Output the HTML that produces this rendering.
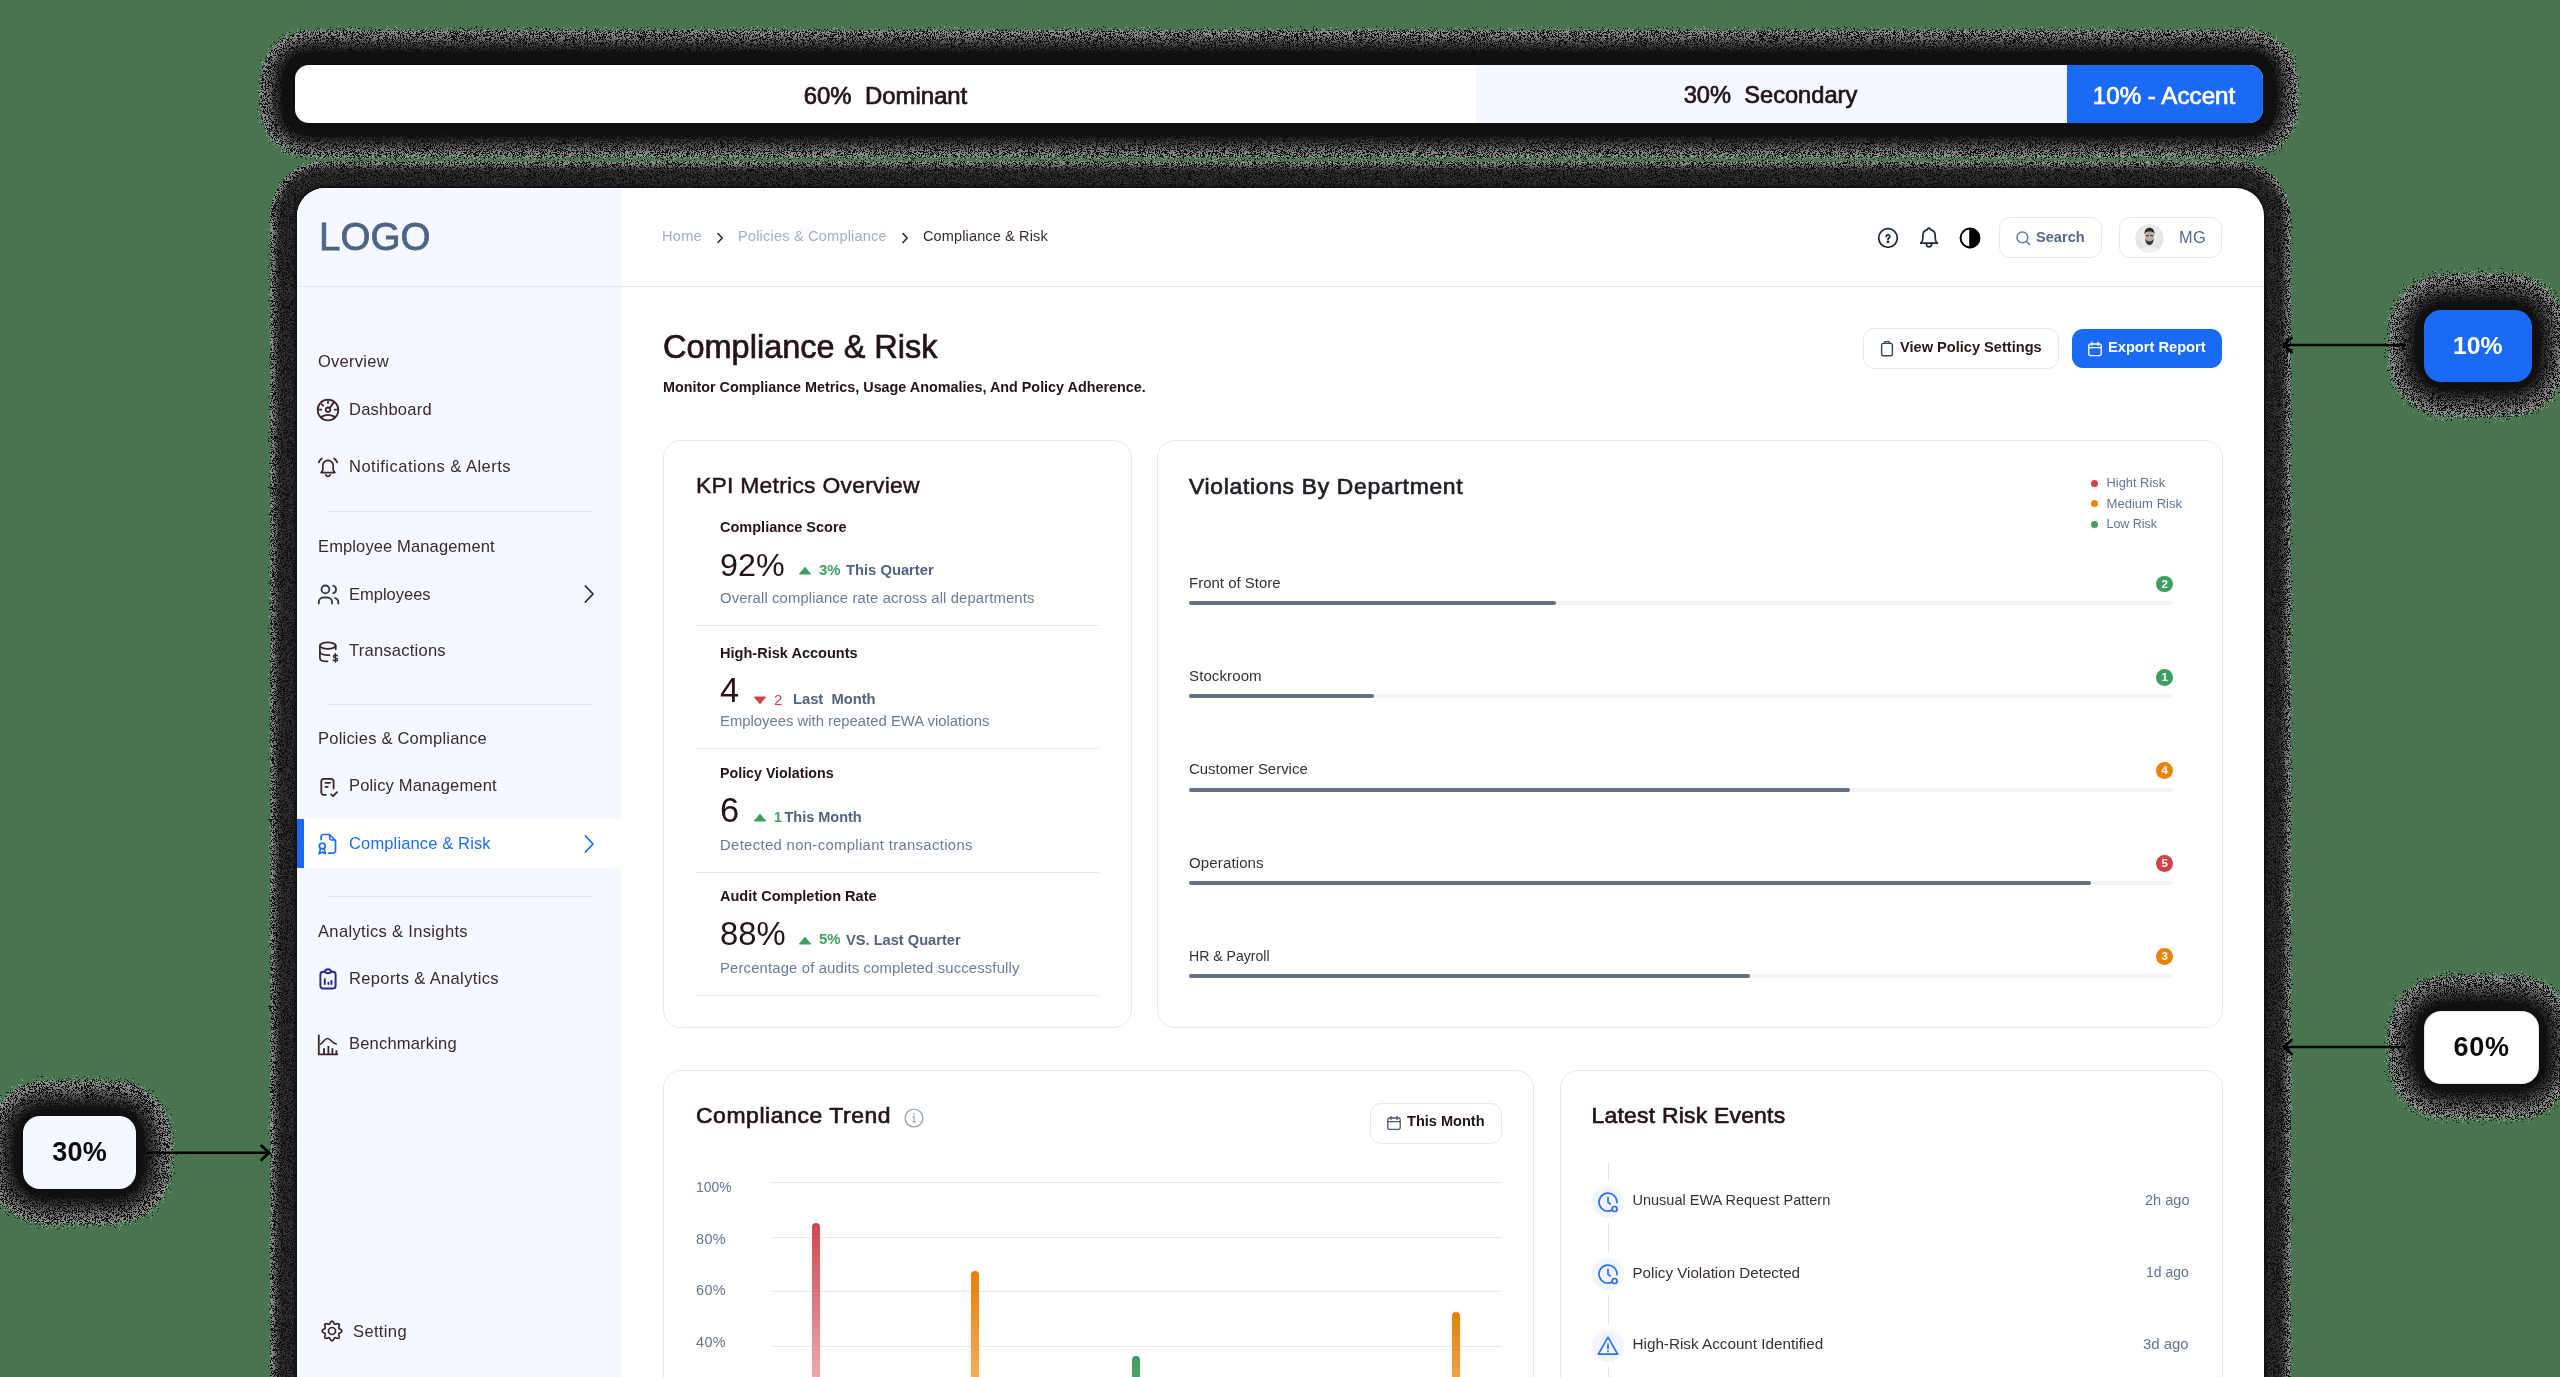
<!DOCTYPE html>
<html><head><meta charset="utf-8"><title>Compliance &amp; Risk</title>
<style>
html,body{margin:0;padding:0;}
body{width:2560px;height:1377px;overflow:hidden;position:relative;background:#4a734f;font-family:"Liberation Sans",sans-serif;}
.b{position:absolute;box-sizing:border-box;}
.t{position:absolute;white-space:nowrap;}
#root{position:absolute;left:0;top:0;width:2560px;height:1377px;overflow:hidden;transform:translateZ(0);will-change:transform;}
</style></head><body><div id="root">
<svg class="b" style="left:0;top:0;" width="2560" height="1377" viewBox="0 0 2560 1377"><defs><filter id="nz" filterUnits="userSpaceOnUse" x="220" y="0" width="2120" height="210" color-interpolation-filters="sRGB"><feGaussianBlur in="SourceAlpha" stdDeviation="8" result="a"/><feTurbulence type="fractalNoise" baseFrequency="1.37" numOctaves="1" seed="7" result="n"/><feColorMatrix in="n" type="matrix" values="0 0 0 0 0  0 0 0 0 0  0 0 0 0 0  1 0 0 0 0" result="nr"/><feComposite in="a" in2="nr" operator="arithmetic" k1="0" k2="1" k3="0.35" k4="0.235" result="m"/><feComponentTransfer in="m" result="mask0"><feFuncA type="discrete" tableValues="0 1"/></feComponentTransfer><feComponentTransfer in="a" result="sup"><feFuncA type="discrete" tableValues="0 1 1 1 1 1 1 1 1 1 1 1 1 1 1 1 1 1 1 1 1 1 1 1 1 1 1 1 1 1 1 1 1 1 1 1 1 1 1 1 1 1 1 1 1 1 1 1 1 1 1 1 1 1 1 1 1 1 1 1"/></feComponentTransfer><feComposite in="mask0" in2="sup" operator="in" result="mask"/><feColorMatrix in="n" type="matrix" values="0 0 0 0 0  0 0 0 0 0  0 0 0 0 0  0 1 0 0 0" result="ng"/><feComposite in="a" in2="ng" operator="arithmetic" k1="0" k2="0" k3="-1" k4="0.985" result="bm1"/><feColorMatrix in="n" type="matrix" values="0 0 0 0 0  0 0 0 0 0  0 0 0 0 0  0 0 1 0 0" result="nb"/><feComposite in="a" in2="nb" operator="arithmetic" k1="0" k2="1" k3="0.22" k4="-0.51" result="bm2"/><feComponentTransfer in="bm1" result="bmk1"><feFuncA type="discrete" tableValues="0 1"/></feComponentTransfer><feComponentTransfer in="bm2" result="bmk2"><feFuncA type="discrete" tableValues="0 1"/></feComponentTransfer><feComposite in="bmk1" in2="bmk2" operator="over" result="bmask"/><feFlood flood-color="#101010" result="blk"/><feComposite in="blk" in2="bmask" operator="in" result="blackpx"/><feColorMatrix in="a" type="matrix" values="0 0 0 -0.56 0.64  0 0 0 -0.56 0.64  0 0 0 -0.56 0.64  0 0 0 0 1" result="greypx"/><feMerge result="mix"><feMergeNode in="greypx"/><feMergeNode in="blackpx"/></feMerge><feComposite in="mix" in2="mask" operator="in"/></filter><filter id="nzp" filterUnits="userSpaceOnUse" x="240" y="130" width="2080" height="1247" color-interpolation-filters="sRGB"><feGaussianBlur in="SourceAlpha" stdDeviation="3.6" result="a"/><feTurbulence type="fractalNoise" baseFrequency="1.37" numOctaves="1" seed="7" result="n"/><feColorMatrix in="n" type="matrix" values="0 0 0 0 0  0 0 0 0 0  0 0 0 0 0  1 0 0 0 0" result="nr"/><feComposite in="a" in2="nr" operator="arithmetic" k1="0" k2="1" k3="0.35" k4="0.235" result="m"/><feComponentTransfer in="m" result="mask0"><feFuncA type="discrete" tableValues="0 1"/></feComponentTransfer><feComponentTransfer in="a" result="sup"><feFuncA type="discrete" tableValues="0 1 1 1 1 1 1 1 1 1 1 1 1 1 1 1 1 1 1 1 1 1 1 1 1 1 1 1 1 1 1 1 1 1 1 1 1 1 1 1 1 1 1 1 1 1 1 1 1 1 1 1 1 1 1 1 1 1 1 1"/></feComponentTransfer><feComposite in="mask0" in2="sup" operator="in" result="mask"/><feColorMatrix in="n" type="matrix" values="0 0 0 0 0  0 0 0 0 0  0 0 0 0 0  0 1 0 0 0" result="ng"/><feComposite in="a" in2="ng" operator="arithmetic" k1="0" k2="0" k3="-1" k4="0.985" result="bm1"/><feColorMatrix in="n" type="matrix" values="0 0 0 0 0  0 0 0 0 0  0 0 0 0 0  0 0 1 0 0" result="nb"/><feComposite in="a" in2="nb" operator="arithmetic" k1="0" k2="1" k3="0.22" k4="-0.51" result="bm2"/><feComponentTransfer in="bm1" result="bmk1"><feFuncA type="discrete" tableValues="0 1"/></feComponentTransfer><feComponentTransfer in="bm2" result="bmk2"><feFuncA type="discrete" tableValues="0 1"/></feComponentTransfer><feComposite in="bmk1" in2="bmk2" operator="over" result="bmask"/><feFlood flood-color="#101010" result="blk"/><feComposite in="blk" in2="bmask" operator="in" result="blackpx"/><feColorMatrix in="a" type="matrix" values="0 0 0 -0.56 0.64  0 0 0 -0.56 0.64  0 0 0 -0.56 0.64  0 0 0 0 1" result="greypx"/><feMerge result="mix"><feMergeNode in="greypx"/><feMergeNode in="blackpx"/></feMerge><feComposite in="mix" in2="mask" operator="in"/></filter><filter id="nzb" x="-35%" y="-45%" width="170%" height="190%" color-interpolation-filters="sRGB"><feGaussianBlur in="SourceAlpha" stdDeviation="10" result="a"/><feTurbulence type="fractalNoise" baseFrequency="1.37" numOctaves="1" seed="7" result="n"/><feColorMatrix in="n" type="matrix" values="0 0 0 0 0  0 0 0 0 0  0 0 0 0 0  1 0 0 0 0" result="nr"/><feComposite in="a" in2="nr" operator="arithmetic" k1="0" k2="1" k3="0.35" k4="0.235" result="m"/><feComponentTransfer in="m" result="mask0"><feFuncA type="discrete" tableValues="0 1"/></feComponentTransfer><feComponentTransfer in="a" result="sup"><feFuncA type="discrete" tableValues="0 1 1 1 1 1 1 1 1 1 1 1 1 1 1 1 1 1 1 1 1 1 1 1 1 1 1 1 1 1 1 1 1 1 1 1 1 1 1 1 1 1 1 1 1 1 1 1 1 1 1 1 1 1 1 1 1 1 1 1"/></feComponentTransfer><feComposite in="mask0" in2="sup" operator="in" result="mask"/><feColorMatrix in="n" type="matrix" values="0 0 0 0 0  0 0 0 0 0  0 0 0 0 0  0 1 0 0 0" result="ng"/><feComposite in="a" in2="ng" operator="arithmetic" k1="0" k2="0" k3="-1" k4="0.985" result="bm1"/><feColorMatrix in="n" type="matrix" values="0 0 0 0 0  0 0 0 0 0  0 0 0 0 0  0 0 1 0 0" result="nb"/><feComposite in="a" in2="nb" operator="arithmetic" k1="0" k2="1" k3="0.22" k4="-0.51" result="bm2"/><feComponentTransfer in="bm1" result="bmk1"><feFuncA type="discrete" tableValues="0 1"/></feComponentTransfer><feComponentTransfer in="bm2" result="bmk2"><feFuncA type="discrete" tableValues="0 1"/></feComponentTransfer><feComposite in="bmk1" in2="bmk2" operator="over" result="bmask"/><feFlood flood-color="#101010" result="blk"/><feComposite in="blk" in2="bmask" operator="in" result="blackpx"/><feColorMatrix in="a" type="matrix" values="0 0 0 -0.56 0.64  0 0 0 -0.56 0.64  0 0 0 -0.56 0.64  0 0 0 0 1" result="greypx"/><feMerge result="mix"><feMergeNode in="greypx"/><feMergeNode in="blackpx"/></feMerge><feComposite in="mix" in2="mask" operator="in"/></filter></defs><g fill="#000"><rect x="271" y="41" width="2016" height="106" rx="38" ry="38" filter="url(#nz)"/><rect x="275" y="166" width="2011" height="1304" rx="50" ry="50" filter="url(#nzp)" fill-opacity="0.82"/><rect x="1" y="1094" width="157" height="117" rx="43" ry="43" filter="url(#nzb)"/><rect x="2402" y="287.5" width="151.5" height="116" rx="43" ry="43" filter="url(#nzb)"/><rect x="2402" y="989" width="158.5" height="116.5" rx="43" ry="43" filter="url(#nzb)"/></g></svg>
<div class="b" style="left:295px;top:65px;width:1968px;height:58px;border-radius:14px;box-shadow:0 0 2px 1px #101010;background:#fff;overflow:hidden;"><div class="b" style="left:1181px;top:0;width:591px;height:58px;background:#f5f8ff;"></div><div class="b" style="left:1772px;top:0;width:196px;height:58px;background:#1b6af5;"></div></div>
<div class="t" style="left:885.5px;top:83.74px;font-size:23.93px;line-height:23.93px;color:#24141a;font-weight:400;-webkit-text-stroke:0.72px #24141a;transform:translateX(-50%);margin-left:0.00px;">60%&nbsp; Dominant</div>
<div class="t" style="left:1770.5px;top:83.97px;font-size:23.66px;line-height:23.66px;color:#24141a;font-weight:400;-webkit-text-stroke:0.71px #24141a;transform:translateX(-50%);margin-left:0.00px;">30%&nbsp; Secondary</div>
<div class="t" style="left:2164px;top:83.51px;font-size:24.2px;line-height:24.2px;color:#fff;font-weight:400;-webkit-text-stroke:0.73px #fff;transform:translateX(-50%);margin-left:0.00px;">10% - Accent</div>
<div class="b" style="left:297px;top:188px;width:1967px;height:1260px;border-radius:28px;box-shadow:0 0 3px 2px #101010;background:#fff;overflow:hidden;"><div class="b" style="left:0;top:0;width:325px;height:1260px;background:#f5f8ff;"></div><div class="b" style="left:0;top:98px;width:1967px;height:1px;background:#e4e7ef;"></div><div class="b" style="left:0;top:631px;width:325px;height:49px;background:#fff;"></div><div class="b" style="left:0;top:631px;width:7px;height:49px;background:#1b6af5;"></div></div>
<div class="t" style="left:319px;top:218.06px;font-size:38.62px;line-height:38.62px;color:#4f6484;font-weight:400;-webkit-text-stroke:0.81px #4f6484;">LOGO</div>
<div class="t" style="left:318px;top:354.00px;font-size:16.54px;line-height:16.54px;color:#3a2a2e;font-weight:400;letter-spacing:0.243px;">Overview</div>
<div class="t" style="left:349px;top:401.50px;font-size:16.54px;line-height:16.54px;color:#3a2a2e;font-weight:400;letter-spacing:0.216px;">Dashboard</div>
<div class="t" style="left:349px;top:458.50px;font-size:16.54px;line-height:16.54px;color:#3a2a2e;font-weight:400;letter-spacing:0.476px;">Notifications &amp; Alerts</div>
<div class="b" style="left:327px;top:511px;width:266px;height:1px;background:#e3e6ee;"></div>
<div class="t" style="left:318px;top:538.50px;font-size:16.54px;line-height:16.54px;color:#3a2a2e;font-weight:400;letter-spacing:0.112px;">Employee Management</div>
<div class="t" style="left:349px;top:585.53px;font-size:16.5px;line-height:16.5px;color:#3a2a2e;font-weight:400;">Employees</div>
<div class="t" style="left:349px;top:643.00px;font-size:16.54px;line-height:16.54px;color:#3a2a2e;font-weight:400;letter-spacing:0.234px;">Transactions</div>
<div class="b" style="left:327px;top:704px;width:266px;height:1px;background:#e3e6ee;"></div>
<div class="t" style="left:318px;top:731.00px;font-size:16.54px;line-height:16.54px;color:#3a2a2e;font-weight:400;letter-spacing:0.208px;">Policies &amp; Compliance</div>
<div class="t" style="left:349px;top:778.00px;font-size:16.54px;line-height:16.54px;color:#3a2a2e;font-weight:400;letter-spacing:0.152px;">Policy Management</div>
<div class="t" style="left:349px;top:835.50px;font-size:16.54px;line-height:16.54px;color:#1d6cf2;font-weight:400;letter-spacing:0.123px;">Compliance &amp; Risk</div>
<div class="b" style="left:327px;top:896px;width:266px;height:1px;background:#e3e6ee;"></div>
<div class="t" style="left:318px;top:923.50px;font-size:16.54px;line-height:16.54px;color:#3a2a2e;font-weight:400;letter-spacing:0.330px;">Analytics &amp; Insights</div>
<div class="t" style="left:349px;top:970.50px;font-size:16.54px;line-height:16.54px;color:#3a2a2e;font-weight:400;letter-spacing:0.348px;">Reports &amp; Analytics</div>
<div class="t" style="left:349px;top:1036.00px;font-size:16.54px;line-height:16.54px;color:#3a2a2e;font-weight:400;letter-spacing:0.176px;">Benchmarking</div>
<div class="t" style="left:353px;top:1324.00px;font-size:16.54px;line-height:16.54px;color:#3a2a2e;font-weight:400;letter-spacing:0.354px;">Setting</div>
<div class="t" style="left:662px;top:228.96px;font-size:14.52px;line-height:14.52px;color:#a3aec2;font-weight:400;letter-spacing:0.298px;">Home</div>
<div class="t" style="left:738px;top:228.96px;font-size:14.52px;line-height:14.52px;color:#a3aec2;font-weight:400;letter-spacing:0.212px;">Policies &amp; Compliance</div>
<div class="t" style="left:923px;top:228.96px;font-size:14.52px;line-height:14.52px;color:#3a2a2e;font-weight:400;letter-spacing:0.127px;">Compliance &amp; Risk</div>
<svg class="b" style="left:715.5px;top:231px;" width="8" height="14" viewBox="0 0 8 14" fill="none"><path d="M2 2.5 L6.2 7 L2 11.5" stroke="#2b2b33" stroke-width="1.6" stroke-linecap="round" stroke-linejoin="round"/></svg>
<svg class="b" style="left:900.5px;top:231px;" width="8" height="14" viewBox="0 0 8 14" fill="none"><path d="M2 2.5 L6.2 7 L2 11.5" stroke="#2b2b33" stroke-width="1.6" stroke-linecap="round" stroke-linejoin="round"/></svg>
<div class="b" style="left:1999px;top:216.8px;width:102.5px;height:41px;border:1.2px solid #e4e8f0;border-radius:11px;background:#fff;"></div>
<div class="t" style="left:2036px;top:229.51px;font-size:14.52px;line-height:14.52px;color:#56688a;font-weight:700;letter-spacing:0.041px;">Search</div>
<div class="b" style="left:2118.5px;top:216.8px;width:103px;height:41px;border:1.2px solid #e4e8f0;border-radius:11px;background:#fff;"></div>
<div class="t" style="left:2179px;top:228.94px;font-size:16.32px;line-height:16.32px;color:#56688a;font-weight:400;letter-spacing:0.315px;">MG</div>
<div class="t" style="left:663px;top:331.23px;font-size:32.51px;line-height:32.51px;color:#24141a;font-weight:400;-webkit-text-stroke:0.68px #24141a;">Compliance &amp; Risk</div>
<div class="t" style="left:663px;top:380.34px;font-size:14.37px;line-height:14.37px;color:#24141a;font-weight:700;">Monitor Compliance Metrics, Usage Anomalies, And Policy Adherence.</div>
<div class="b" style="left:1863px;top:328px;width:195.5px;height:41px;border:1.2px solid #e4e8f0;border-radius:11px;background:#fff;"></div>
<div class="t" style="left:1900px;top:339.84px;font-size:14.6px;line-height:14.6px;color:#2b1619;font-weight:700;">View Policy Settings</div>
<div class="b" style="left:2071.5px;top:328.5px;width:150px;height:39.5px;border-radius:11px;background:#1b6af5;"></div>
<div class="t" style="left:2108px;top:339.80px;font-size:14.65px;line-height:14.65px;color:#fff;font-weight:700;">Export Report</div>
<div class="b" style="left:663px;top:440px;width:468.5px;height:588px;border:1.2px solid #e4e8f0;border-radius:18px;background:#fff;"></div>
<div class="t" style="left:696px;top:474.37px;font-size:22.9px;line-height:22.9px;color:#24141a;font-weight:400;-webkit-text-stroke:0.48px #24141a;letter-spacing:0.255px;">KPI Metrics Overview</div>
<div class="t" style="left:720px;top:519.71px;font-size:14.52px;line-height:14.52px;color:#24141a;font-weight:700;">Compliance Score</div>
<div class="t" style="left:720px;top:548.93px;font-size:32.27px;line-height:32.27px;color:#24141a;font-weight:400;">92%</div>
<svg class="b" style="left:797.5px;top:566.0px;" width="14" height="9" viewBox="0 0 14 9" fill="none"><path d="M7 1.2 L12.6 8 L1.4 8 Z" fill="#3f9f62" stroke="#3f9f62" stroke-width="1" stroke-linejoin="round"/></svg>
<div class="t" style="left:819px;top:562.84px;font-size:14.95px;line-height:14.95px;color:#3f9f62;font-weight:700;">3%</div>
<div class="t" style="left:846px;top:563.01px;font-size:14.75px;line-height:14.75px;color:#52637f;font-weight:700;">This Quarter</div>
<div class="t" style="left:720px;top:591.19px;font-size:14.84px;line-height:14.84px;color:#6b7b98;font-weight:400;letter-spacing:0.118px;">Overall compliance rate across all departments</div>
<div class="b" style="left:696px;top:624.5px;width:403px;height:1px;background:#e4e7ef;"></div>
<div class="t" style="left:720px;top:645.93px;font-size:14.55px;line-height:14.55px;color:#24141a;font-weight:700;">High-Risk Accounts</div>
<div class="t" style="left:720px;top:673.34px;font-size:34.45px;line-height:34.45px;color:#24141a;font-weight:400;">4</div>
<svg class="b" style="left:753px;top:696.0px;" width="14" height="9" viewBox="0 0 14 9" fill="none"><path d="M7 7.8 L12.6 1 L1.4 1 Z" fill="#d1434b" stroke="#d1434b" stroke-width="1" stroke-linejoin="round"/></svg>
<div class="t" style="left:774px;top:691.76px;font-size:15.05px;line-height:15.05px;color:#d1434b;font-weight:400;">2</div>
<div class="t" style="left:793px;top:692.03px;font-size:14.73px;line-height:14.73px;color:#52637f;font-weight:700;">Last&nbsp; Month</div>
<div class="t" style="left:720px;top:714.44px;font-size:14.84px;line-height:14.84px;color:#6b7b98;font-weight:400;letter-spacing:0.011px;">Employees with repeated EWA violations</div>
<div class="b" style="left:696px;top:748px;width:403px;height:1px;background:#e4e7ef;"></div>
<div class="t" style="left:720px;top:765.95px;font-size:14.24px;line-height:14.24px;color:#24141a;font-weight:700;">Policy Violations</div>
<div class="t" style="left:720px;top:793.34px;font-size:34.45px;line-height:34.45px;color:#24141a;font-weight:400;">6</div>
<svg class="b" style="left:753px;top:812.5px;" width="14" height="9" viewBox="0 0 14 9" fill="none"><path d="M7 1.2 L12.6 8 L1.4 8 Z" fill="#3f9f62" stroke="#3f9f62" stroke-width="1" stroke-linejoin="round"/></svg>
<div class="t" style="left:774px;top:809.98px;font-size:14.2px;line-height:14.2px;color:#3f9f62;font-weight:700;">1</div>
<div class="t" style="left:784.5px;top:809.75px;font-size:14.47px;line-height:14.47px;color:#52637f;font-weight:700;">This Month</div>
<div class="t" style="left:720px;top:838.44px;font-size:14.84px;line-height:14.84px;color:#6b7b98;font-weight:400;letter-spacing:0.345px;">Detected non-compliant transactions</div>
<div class="b" style="left:696px;top:872px;width:403px;height:1px;background:#e4e7ef;"></div>
<div class="t" style="left:720px;top:888.69px;font-size:14.54px;line-height:14.54px;color:#24141a;font-weight:700;">Audit Completion Rate</div>
<div class="t" style="left:720px;top:918.01px;font-size:32.77px;line-height:32.77px;color:#24141a;font-weight:400;">88%</div>
<svg class="b" style="left:797.5px;top:935.5px;" width="14" height="9" viewBox="0 0 14 9" fill="none"><path d="M7 1.2 L12.6 8 L1.4 8 Z" fill="#3f9f62" stroke="#3f9f62" stroke-width="1" stroke-linejoin="round"/></svg>
<div class="t" style="left:819px;top:932.34px;font-size:14.95px;line-height:14.95px;color:#3f9f62;font-weight:700;">5%</div>
<div class="t" style="left:846px;top:932.61px;font-size:14.64px;line-height:14.64px;color:#52637f;font-weight:700;">VS. Last Quarter</div>
<div class="t" style="left:720px;top:961.44px;font-size:14.84px;line-height:14.84px;color:#6b7b98;font-weight:400;letter-spacing:0.161px;">Percentage of audits completed successfully</div>
<div class="b" style="left:696px;top:995px;width:403px;height:1px;background:#e4e7ef;"></div>
<div class="b" style="left:1157px;top:440px;width:1065.5px;height:588px;border:1.2px solid #e4e8f0;border-radius:18px;background:#fff;"></div>
<div class="t" style="left:1189px;top:475.12px;font-size:22.9px;line-height:22.9px;color:#1f1f26;font-weight:400;-webkit-text-stroke:0.69px #1f1f26;letter-spacing:0.684px;">Violations By Department</div>
<div class="b" style="left:2090.5px;top:480px;width:7px;height:7px;border-radius:50%;background:#d1434b;"></div>
<div class="t" style="left:2106.5px;top:476.71px;font-size:12.87px;line-height:12.87px;color:#64748f;font-weight:400;">Hight Risk</div>
<div class="b" style="left:2090.5px;top:500px;width:7px;height:7px;border-radius:50%;background:#e8830c;"></div>
<div class="t" style="left:2106.5px;top:497.02px;font-size:13.09px;line-height:13.09px;color:#64748f;font-weight:400;">Medium Risk</div>
<div class="b" style="left:2090.5px;top:521px;width:7px;height:7px;border-radius:50%;background:#3f9f62;"></div>
<div class="t" style="left:2106.5px;top:518.04px;font-size:12.48px;line-height:12.48px;color:#64748f;font-weight:400;">Low Risk</div>
<div class="t" style="left:1189px;top:575.31px;font-size:14.99px;line-height:14.99px;color:#3a2f35;font-weight:400;">Front of Store</div>
<div class="b" style="left:1189px;top:601.1px;width:984px;height:4px;border-radius:2px;background:#f1f3f6;"></div>
<div class="b" style="left:1189px;top:601.1px;width:367px;height:4px;border-radius:2px;background:#667085;"></div>
<div class="b" style="left:2156.3999999999996px;top:575.9000000000001px;width:16.6px;height:16.6px;border-radius:50%;background:#3f9f62;"></div>
<div class="t" style="left:2164.7px;top:578.77px;font-size:11.5px;line-height:11.5px;color:#fff;font-weight:700;transform:translateX(-50%);margin-left:0.00px;">2</div>
<div class="t" style="left:1189px;top:668.46px;font-size:15.05px;line-height:15.05px;color:#3a2f35;font-weight:400;letter-spacing:0.090px;">Stockroom</div>
<div class="b" style="left:1189px;top:694.3000000000001px;width:984px;height:4px;border-radius:2px;background:#f1f3f6;"></div>
<div class="b" style="left:1189px;top:694.3000000000001px;width:185px;height:4px;border-radius:2px;background:#667085;"></div>
<div class="b" style="left:2156.3999999999996px;top:668.95px;width:16.6px;height:16.6px;border-radius:50%;background:#3f9f62;"></div>
<div class="t" style="left:2164.7px;top:671.82px;font-size:11.5px;line-height:11.5px;color:#fff;font-weight:700;transform:translateX(-50%);margin-left:0.00px;">1</div>
<div class="t" style="left:1189px;top:761.75px;font-size:14.94px;line-height:14.94px;color:#3a2f35;font-weight:400;">Customer Service</div>
<div class="b" style="left:1189px;top:787.5px;width:984px;height:4px;border-radius:2px;background:#f1f3f6;"></div>
<div class="b" style="left:1189px;top:787.5px;width:661px;height:4px;border-radius:2px;background:#667085;"></div>
<div class="b" style="left:2156.3999999999996px;top:762.0000000000001px;width:16.6px;height:16.6px;border-radius:50%;background:#e8830c;"></div>
<div class="t" style="left:2164.7px;top:764.87px;font-size:11.5px;line-height:11.5px;color:#fff;font-weight:700;transform:translateX(-50%);margin-left:0.00px;">4</div>
<div class="t" style="left:1189px;top:854.86px;font-size:15.05px;line-height:15.05px;color:#3a2f35;font-weight:400;letter-spacing:0.114px;">Operations</div>
<div class="b" style="left:1189px;top:880.7px;width:984px;height:4px;border-radius:2px;background:#f1f3f6;"></div>
<div class="b" style="left:1189px;top:880.7px;width:902px;height:4px;border-radius:2px;background:#667085;"></div>
<div class="b" style="left:2156.3999999999996px;top:855.0500000000001px;width:16.6px;height:16.6px;border-radius:50%;background:#d1434b;"></div>
<div class="t" style="left:2164.7px;top:857.92px;font-size:11.5px;line-height:11.5px;color:#fff;font-weight:700;transform:translateX(-50%);margin-left:0.00px;">5</div>
<div class="t" style="left:1189px;top:948.87px;font-size:14.09px;line-height:14.09px;color:#3a2f35;font-weight:400;">HR &amp; Payroll</div>
<div class="b" style="left:1189px;top:973.9000000000001px;width:984px;height:4px;border-radius:2px;background:#f1f3f6;"></div>
<div class="b" style="left:1189px;top:973.9000000000001px;width:561px;height:4px;border-radius:2px;background:#667085;"></div>
<div class="b" style="left:2156.3999999999996px;top:948.1000000000001px;width:16.6px;height:16.6px;border-radius:50%;background:#e8830c;"></div>
<div class="t" style="left:2164.7px;top:950.97px;font-size:11.5px;line-height:11.5px;color:#fff;font-weight:700;transform:translateX(-50%);margin-left:0.00px;">3</div>
<div class="b" style="left:663px;top:1070px;width:871px;height:400px;border:1.2px solid #e4e8f0;border-radius:18px;background:#fff;"></div>
<div class="t" style="left:696px;top:1104.37px;font-size:22.9px;line-height:22.9px;color:#24141a;font-weight:400;-webkit-text-stroke:0.69px #24141a;letter-spacing:0.589px;">Compliance Trend</div>
<svg class="b" style="left:904px;top:1107.5px;" width="20" height="20" viewBox="0 0 20 20" fill="none"><circle cx="10" cy="10" r="8.9" stroke="#94a3b8" stroke-width="1.4"/><path d="M10.1 8.6v5.2M8.9 13.8h2.5M8.9 8.6h1.2" stroke="#94a3b8" stroke-width="1.2" stroke-linecap="round"/><circle cx="10" cy="6.1" r="0.9" fill="#94a3b8"/></svg>
<div class="b" style="left:1370px;top:1102.5px;width:131.5px;height:41px;border:1.2px solid #e4e8f0;border-radius:11px;background:#fff;"></div>
<div class="t" style="left:1407px;top:1114.42px;font-size:14.56px;line-height:14.56px;color:#24141a;font-weight:700;">This Month</div>
<svg class="b" style="left:1386px;top:1114.5px;" width="16" height="16" viewBox="0 0 16 16" fill="none"><rect x="1.8" y="3" width="12.4" height="11.4" rx="1.6" stroke="#4b5a75" stroke-width="1.3"/><path d="M1.8 6.6h12.4M5 1.4v3M11 1.4v3" stroke="#4b5a75" stroke-width="1.3" stroke-linecap="round"/></svg>
<div class="b" style="left:770.5px;top:1181.7px;width:731px;height:1.2px;background:#e6e9f0;"></div>
<div class="t" style="left:696px;top:1180.72px;font-size:13.92px;line-height:13.92px;color:#64748f;font-weight:400;">100%</div>
<div class="b" style="left:770.5px;top:1236.5px;width:731px;height:1.2px;background:#e6e9f0;"></div>
<div class="t" style="left:696px;top:1232.29px;font-size:14.42px;line-height:14.42px;color:#64748f;font-weight:400;letter-spacing:0.374px;">80%</div>
<div class="b" style="left:770.5px;top:1291.3px;width:731px;height:1.2px;background:#e6e9f0;"></div>
<div class="t" style="left:696px;top:1283.29px;font-size:14.42px;line-height:14.42px;color:#64748f;font-weight:400;letter-spacing:0.374px;">60%</div>
<div class="b" style="left:770.5px;top:1346.1px;width:731px;height:1.2px;background:#e6e9f0;"></div>
<div class="t" style="left:696px;top:1334.79px;font-size:14.42px;line-height:14.42px;color:#64748f;font-weight:400;letter-spacing:0.374px;">40%</div>
<div class="b" style="left:811.5px;top:1223px;width:8px;height:237px;border-radius:4px 4px 0 0;background:linear-gradient(180deg,#cf4650 0,#eeb4b8 71%);"></div>
<div class="b" style="left:971.3px;top:1270.5px;width:8px;height:189.5px;border-radius:4px 4px 0 0;background:linear-gradient(180deg,#e87f0a 0,#f8c98e 89%);"></div>
<div class="b" style="left:1132px;top:1355.5px;width:8px;height:104.5px;border-radius:4px 4px 0 0;background:linear-gradient(180deg,#3f9a5e 0,#8cc9a2 100%);"></div>
<div class="b" style="left:1452.3px;top:1311.8px;width:8px;height:148.20000000000005px;border-radius:4px 4px 0 0;background:linear-gradient(180deg,#e87f0a 0,#f8c98e 100%);"></div>
<div class="b" style="left:1559.5px;top:1070px;width:663px;height:400px;border:1.2px solid #e4e8f0;border-radius:18px;background:#fff;"></div>
<div class="t" style="left:1591.5px;top:1104.37px;font-size:22.9px;line-height:22.9px;color:#24141a;font-weight:400;-webkit-text-stroke:0.69px #24141a;letter-spacing:0.238px;">Latest Risk Events</div>
<div class="b" style="left:1608px;top:1161.8px;width:1.3px;height:19.200000000000045px;background:#dfe3ec;"></div>
<div class="b" style="left:1608px;top:1223px;width:1.3px;height:30px;background:#dfe3ec;"></div>
<div class="b" style="left:1608px;top:1295px;width:1.3px;height:29.5px;background:#dfe3ec;"></div>
<div class="b" style="left:1608px;top:1366px;width:1.3px;height:34px;background:#dfe3ec;"></div>
<div class="b" style="left:1592px;top:1186px;width:32px;height:32px;border-radius:50%;background:#f1f5fe;"></div>
<div class="t" style="left:1632.5px;top:1193.48px;font-size:14.5px;line-height:14.5px;color:#3a2f35;font-weight:400;">Unusual EWA Request Pattern</div>
<div class="t" style="left:2145px;top:1193.40px;font-size:14.59px;line-height:14.59px;color:#64748f;font-weight:400;">2h ago</div>
<svg class="b" style="left:1596px;top:1190px;" width="24" height="24" viewBox="0 0 24 24" fill="none"><path d="M16.2 20.1A9 9 0 1 1 21 12.6" stroke="#2f6fed" stroke-width="1.7" stroke-linecap="round"/><path d="M12 7.3v4.9l2.2 1.8" stroke="#2f6fed" stroke-width="1.7" stroke-linecap="round" stroke-linejoin="round"/><circle cx="18.6" cy="19" r="2.5" stroke="#2f6fed" stroke-width="1.7"/></svg>
<div class="b" style="left:1592px;top:1258px;width:32px;height:32px;border-radius:50%;background:#f1f5fe;"></div>
<div class="t" style="left:1632.5px;top:1264.65px;font-size:15.18px;line-height:15.18px;color:#3a2f35;font-weight:400;">Policy Violation Detected</div>
<div class="t" style="left:2146px;top:1265.70px;font-size:13.94px;line-height:13.94px;color:#64748f;font-weight:400;">1d ago</div>
<svg class="b" style="left:1596px;top:1262px;" width="24" height="24" viewBox="0 0 24 24" fill="none"><path d="M16.2 20.1A9 9 0 1 1 21 12.6" stroke="#2f6fed" stroke-width="1.7" stroke-linecap="round"/><path d="M12 7.3v4.9l2.2 1.8" stroke="#2f6fed" stroke-width="1.7" stroke-linecap="round" stroke-linejoin="round"/><circle cx="18.6" cy="19" r="2.5" stroke="#2f6fed" stroke-width="1.7"/></svg>
<div class="b" style="left:1592px;top:1330px;width:32px;height:32px;border-radius:50%;background:#f1f5fe;"></div>
<div class="t" style="left:1632.5px;top:1336.34px;font-size:15.25px;line-height:15.25px;color:#3a2f35;font-weight:400;">High-Risk Account Identified</div>
<div class="t" style="left:2143px;top:1336.62px;font-size:14.92px;line-height:14.92px;color:#64748f;font-weight:400;">3d ago</div>
<svg class="b" style="left:1596px;top:1334px;" width="24" height="24" viewBox="0 0 24 24" fill="none"><path d="M12 3.2 L21.6 20.2 H2.4 Z" stroke="#2f6fed" stroke-width="1.7" stroke-linejoin="round"/><path d="M12 10v4.6" stroke="#2f6fed" stroke-width="1.7" stroke-linecap="round"/><circle cx="12" cy="17.3" r="0.95" fill="#2f6fed"/></svg>
<div class="b" style="left:23px;top:1116px;width:113px;height:73px;border-radius:17px;background:#f5f8ff;box-shadow:0 0 2px 1px #101010;"></div>
<div class="t" style="left:79.5px;top:1138.87px;font-size:27.03px;line-height:27.03px;color:#0c0c10;font-weight:700;letter-spacing:0.245px;transform:translateX(-50%);margin-left:0.12px;">30%</div>
<div class="b" style="left:2424px;top:309.5px;width:107.5px;height:72px;border-radius:17px;background:#1b6af5;box-shadow:0 0 2px 1px #101010;"></div>
<div class="t" style="left:2477.7px;top:333.82px;font-size:24.78px;line-height:24.78px;color:#fff;font-weight:700;transform:translateX(-50%);margin-left:0.00px;">10%</div>
<div class="b" style="left:2424px;top:1011px;width:114.5px;height:72.5px;border-radius:17px;background:#fff;border:1.5px solid #e3e6f0;box-shadow:0 0 2px 1px #101010;"></div>
<div class="t" style="left:2481.3px;top:1033.72px;font-size:27.03px;line-height:27.03px;color:#0c0c10;font-weight:700;letter-spacing:0.745px;transform:translateX(-50%);margin-left:0.37px;">60%</div>
<svg class="b" style="left:145px;top:1140px;" width="130" height="26" viewBox="0 0 130 26" fill="none"><path d="M2.5 12.8H123" stroke="#000" stroke-width="2.6"/><path d="M116.5 5.8 L124 12.8 L116.5 19.8" stroke="#000" stroke-width="2.8" stroke-linecap="round" stroke-linejoin="round"/></svg>
<svg class="b" style="left:2280px;top:332.4px;" width="130" height="26" viewBox="0 0 130 26" fill="none"><path d="M5 13H126" stroke="#000" stroke-width="2.6"/><path d="M11.5 6 L4 13 L11.5 20" stroke="#000" stroke-width="2.8" stroke-linecap="round" stroke-linejoin="round"/></svg>
<svg class="b" style="left:2280px;top:1034.3px;" width="130" height="26" viewBox="0 0 130 26" fill="none"><path d="M5 13H126" stroke="#000" stroke-width="2.6"/><path d="M11.5 6 L4 13 L11.5 20" stroke="#000" stroke-width="2.8" stroke-linecap="round" stroke-linejoin="round"/></svg>
<svg class="b" style="left:314.2px;top:396.0px;" width="28" height="28" viewBox="-14.0 -14.0 28 28" fill="none" stroke="#3a2529" stroke-width="1.8" stroke-linecap="round" stroke-linejoin="round"><circle r="10.3"/><circle cx="0" cy="-0.3" r="2.2"/><path d="M1.6 -1.9 L5.8 -7.6"/><path d="M0 -8.9v2.1M-8.6 -0.3h1.9M8.6 -0.3h-1.9M-6.2 -5.6l1.4 1.2"/><path d="M-6.3 6.6 Q0 3.3 6.3 6.6" /><path d="M-6.6 6.3 Q0 9 6.6 6.3" stroke-width="0"/></svg>
<svg class="b" style="left:314.0px;top:453.0px;" width="28" height="28" viewBox="-14.0 -14.0 28 28" fill="none" stroke="#3a2529" stroke-width="1.7" stroke-linecap="round" stroke-linejoin="round"><path d="M-6.9 5.6 h13.8 l-1.7 -2.3 v-4.7 a5.2 5.2 0 0 0 -10.4 0 v4.7 z"/><path d="M-2.1 7.9 a2.2 2.2 0 0 0 4.2 0"/><path d="M-9.2 -4.6 q1.1 -2.4 3 -3.9M9.2 -4.6 q-1.1 -2.4 -3 -3.9"/></svg>
<svg class="b" style="left:314.0px;top:579.5px;" width="28" height="28" viewBox="-14.0 -14.0 28 28" fill="none" stroke="#2f3a4a" stroke-width="1.8" stroke-linecap="round" stroke-linejoin="round"><circle cx="-2.6" cy="-4.6" r="3.9"/><path d="M-9.2 9.5 v-1.4 a4.6 4.6 0 0 1 4.6 -4.6 h4 a4.6 4.6 0 0 1 4.6 4.6 v1.4"/><path d="M5.2 -8.3 a3.9 3.9 0 0 1 0 7.5"/><path d="M7.2 4 a4.6 4.6 0 0 1 3.1 4.3 v1.2"/></svg>
<svg class="b" style="left:314.0px;top:638.0px;" width="28" height="28" viewBox="-14.0 -14.0 28 28" fill="none" stroke="#3a2529" stroke-width="1.7" stroke-linecap="round" stroke-linejoin="round"><ellipse cx="-0.2" cy="-6.4" rx="7.9" ry="3.2"/><path d="M-8.1 -6.4 v12.6 c0 1.8 3.4 3.1 7.6 3.2"/><path d="M-8.1 -0.1 c0 1.8 3.6 3.2 8 3.2 h1.6"/><path d="M7.7 -6.4 v3.6"/><path d="M9.3 3.9 c-0.4 -0.8 -1.2 -1 -2 -1 c-1.1 0 -1.900 0.6 -1.900 1.500 c0 2.100 4.100 1 4.100 3.100 c0 0.900 -0.900 1.500 -2.100 1.500 c-0.900 0 -1.700 -0.300 -2.300 -1.100 M7.300 1.800 v8.300" stroke-width="1.4"/></svg>
<svg class="b" style="left:313.6px;top:772.8px;" width="28" height="28" viewBox="-14.0 -14.0 28 28" fill="none" stroke="#3a2529" stroke-width="1.8" stroke-linecap="round" stroke-linejoin="round"><path d="M5.6 1.6 v-7.2 a2.6 2.6 0 0 0 -2.6 -2.6 h-7.1 a2.6 2.6 0 0 0 -2.6 2.6 v10.9 a2.6 2.6 0 0 0 2.6 2.6 h1.9"/><path d="M-2.6 -4.2 h4.6 M-2.6 -0.2 h2.4"/><path d="M3.2 7.3 l1.9 1.9 l3.9 -4"/></svg>
<svg class="b" style="left:313.8px;top:830.2px;" width="28" height="28" viewBox="-14.0 -14.0 28 28" fill="none" stroke="#1d6cf2" stroke-width="1.7" stroke-linecap="round" stroke-linejoin="round"><path d="M-6.9 -4.4 v-2.7 a2.4 2.4 0 0 1 2.4 -2.4 h5.9 l6.1 6 v10.3 a2.4 2.4 0 0 1 -2.4 2.4 h-4.4"/><path d="M1.6 -9.2 v3.3 a2 2 0 0 0 2 2 h3.3" stroke-width="1.5"/><circle cx="-5.7" cy="1.9" r="2.9"/><path d="M-7.5 4.4 l-1.3 5.4 l3.1 -1.7 l3.1 1.7 l-1.3 -5.4" /></svg>
<svg class="b" style="left:314.0px;top:966.0px;" width="28" height="28" viewBox="-14.0 -14.0 28 28" fill="none" stroke="#26268c" stroke-width="1.9" stroke-linecap="round" stroke-linejoin="round"><rect x="-7.6" y="-8.2" width="15.2" height="16.7" rx="2.8"/><ellipse cx="0" cy="-8.8" rx="3" ry="2" fill="#f5f8ff"/><path d="M-3.2 -0.9 v5M0.4 2.7 v1.4M3.4 0.9 v3.2" stroke-width="1.9"/></svg>
<svg class="b" style="left:314.4px;top:1030.5px;" width="28" height="28" viewBox="-14.0 -14.0 28 28" fill="none" stroke="#3a2529" stroke-width="1.8" stroke-linecap="round" stroke-linejoin="round"><path d="M-9.2 -9.4 V9.4 H9.2" stroke-linecap="square"/><path d="M-7.6 -0.9 c3.2 -1.6 3.9 -5.6 7.2 -5.6 c3.2 0 4.2 5.2 8.8 5.4" stroke-width="1.5"/><path d="M-4 3.3 V9M0.4 0.9 V9M4.4 3.3 V9M8.4 5.3 V9" stroke-linecap="butt"/></svg>
<svg class="b" style="left:318.2px;top:1317.0px;" width="28" height="28" viewBox="-14.0 -14.0 28 28" fill="none" stroke="#3a2529" stroke-width="1.7" stroke-linecap="round" stroke-linejoin="round"><path d="M0.00 -9.80 L0.38 -9.73 L0.75 -9.53 L1.09 -9.22 L1.40 -8.83 L1.67 -8.39 L1.91 -7.94 L2.12 -7.52 L2.33 -7.17 L2.55 -6.91 L2.79 -6.74 L3.08 -6.69 L3.42 -6.72 L3.82 -6.82 L4.27 -6.96 L4.75 -7.11 L5.25 -7.23 L5.75 -7.29 L6.21 -7.27 L6.61 -7.15 L6.93 -6.93 L7.15 -6.61 L7.27 -6.21 L7.29 -5.75 L7.23 -5.25 L7.11 -4.75 L6.96 -4.27 L6.82 -3.82 L6.72 -3.42 L6.69 -3.08 L6.74 -2.79 L6.91 -2.55 L7.17 -2.33 L7.52 -2.12 L7.94 -1.91 L8.39 -1.67 L8.83 -1.40 L9.22 -1.09 L9.53 -0.75 L9.73 -0.38 L9.80 -0.00 L9.73 0.38 L9.53 0.75 L9.22 1.09 L8.83 1.40 L8.39 1.67 L7.94 1.91 L7.52 2.12 L7.17 2.33 L6.91 2.55 L6.74 2.79 L6.69 3.08 L6.72 3.42 L6.82 3.82 L6.96 4.27 L7.11 4.75 L7.23 5.25 L7.29 5.75 L7.27 6.21 L7.15 6.61 L6.93 6.93 L6.61 7.15 L6.21 7.27 L5.75 7.29 L5.25 7.23 L4.75 7.11 L4.27 6.96 L3.82 6.82 L3.42 6.72 L3.08 6.69 L2.79 6.74 L2.55 6.91 L2.33 7.17 L2.12 7.52 L1.91 7.94 L1.67 8.39 L1.40 8.83 L1.09 9.22 L0.75 9.53 L0.38 9.73 L0.00 9.80 L-0.38 9.73 L-0.75 9.53 L-1.09 9.22 L-1.40 8.83 L-1.67 8.39 L-1.91 7.94 L-2.12 7.52 L-2.33 7.17 L-2.55 6.91 L-2.79 6.74 L-3.08 6.69 L-3.42 6.72 L-3.82 6.82 L-4.27 6.96 L-4.75 7.11 L-5.25 7.23 L-5.75 7.29 L-6.21 7.27 L-6.61 7.15 L-6.93 6.93 L-7.15 6.61 L-7.27 6.21 L-7.29 5.75 L-7.23 5.25 L-7.11 4.75 L-6.96 4.27 L-6.82 3.82 L-6.72 3.42 L-6.69 3.08 L-6.74 2.79 L-6.91 2.55 L-7.17 2.33 L-7.52 2.12 L-7.94 1.91 L-8.39 1.67 L-8.83 1.40 L-9.22 1.09 L-9.53 0.75 L-9.73 0.38 L-9.80 0.00 L-9.73 -0.38 L-9.53 -0.75 L-9.22 -1.09 L-8.83 -1.40 L-8.39 -1.67 L-7.94 -1.91 L-7.52 -2.12 L-7.17 -2.33 L-6.91 -2.55 L-6.74 -2.79 L-6.69 -3.08 L-6.72 -3.42 L-6.82 -3.82 L-6.96 -4.27 L-7.11 -4.75 L-7.23 -5.25 L-7.29 -5.75 L-7.27 -6.21 L-7.15 -6.61 L-6.93 -6.93 L-6.61 -7.15 L-6.21 -7.27 L-5.75 -7.29 L-5.25 -7.23 L-4.75 -7.11 L-4.27 -6.96 L-3.82 -6.82 L-3.42 -6.72 L-3.08 -6.69 L-2.79 -6.74 L-2.55 -6.91 L-2.33 -7.17 L-2.12 -7.52 L-1.91 -7.94 L-1.67 -8.39 L-1.40 -8.83 L-1.09 -9.22 L-0.75 -9.53 L-0.38 -9.73 Z"/><circle r="3.5"/></svg>
<svg class="b" style="left:577.8px;top:582.5px;" width="22" height="22" viewBox="-11.0 -11.0 22 22" fill="none" stroke="#2b2b33" stroke-width="1.8" stroke-linecap="round" stroke-linejoin="round"><path d="M-3.6 -8 L4 0 L-3.6 8"/></svg>
<svg class="b" style="left:577.8px;top:832.5px;" width="22" height="22" viewBox="-11.0 -11.0 22 22" fill="none" stroke="#1d6cf2" stroke-width="1.8" stroke-linecap="round" stroke-linejoin="round"><path d="M-3.6 -8 L4 0 L-3.6 8"/></svg>
<svg class="b" style="left:1874.3px;top:224.0px;" width="28" height="28" viewBox="-14.0 -14.0 28 28" fill="none" stroke="#1f2937" stroke-width="1.7" stroke-linecap="round" stroke-linejoin="round"><circle r="9.3"/><path d="M-1.7 -1.5 a1.75 1.7 0 1 1 2.7 1.4 c-0.7 0.4 -1 0.8 -1 1.5" stroke-width="1.8"/><circle cx="0" cy="3.9" r="0.6" fill="#1f2937"/></svg>
<svg class="b" style="left:1915.0px;top:224.3px;" width="28" height="28" viewBox="-14.0 -14.0 28 28" fill="none" stroke="#1f2937" stroke-width="1.7" stroke-linecap="round" stroke-linejoin="round"><path d="M-8.3 5.2 h16.600 c-1.400 -1.400 -2.100 -2.900 -2.100 -5 v-2.600 a6.200 6.200 0 0 0 -4.700 -6 a1.500 1.500 0 0 0 -3 0 a6.200 6.200 0 0 0 -4.700 6 v2.600 c0 2.100 -0.700 3.600 -2.100 5 z"/><path d="M-2.600 5.600 v0.600 a2.600 2.600 0 0 0 5.200 0 v-0.600"/></svg>
<svg class="b" style="left:1956.0px;top:224.0px;" width="28" height="28" viewBox="-14.0 -14.0 28 28" fill="none" stroke="#000" stroke-width="1.6" stroke-linecap="round" stroke-linejoin="round"><circle r="9.4" stroke="#000" stroke-width="2"/><path d="M0 -9.4 a9.4 9.4 0 0 1 0 18.8 z" fill="#000" stroke="#000"/></svg>
<svg class="b" style="left:2012.6px;top:228.2px;" width="20" height="20" viewBox="-10.0 -10.0 20 20" fill="none" stroke="#6b7a94" stroke-width="1.5" stroke-linecap="round" stroke-linejoin="round"><circle cx="-0.6" cy="-0.6" r="5.4"/><path d="M3.5 3.5 L6.4 6.4"/></svg>
<svg class="b" style="left:2134.5px;top:223.5px;" width="29" height="29" viewBox="-14.5 -14.5 29 29"><defs><clipPath id="avc"><circle r="14.2"/></clipPath><radialGradient id="avg" cx="50%" cy="40%" r="70%"><stop offset="0" stop-color="#f4f4f4"/><stop offset="1" stop-color="#dcdcdc"/></radialGradient></defs><g clip-path="url(#avc)"><rect x="-15" y="-15" width="30" height="30" fill="url(#avg)"/><path d="M-11 15 c0 -6 4 -7.5 11 -7.5 s11 1.500 11 7.5 z" fill="#f1f1f1" stroke="#d0d0d0" stroke-width="0.6"/><ellipse cx="0" cy="-1.6" rx="4.6" ry="6" fill="#b9b0aa"/><path d="M-4.9 -3.2 c-0.6 -5.6 2 -7.6 4.9 -7.6 s5.500 2 4.9 7.6 c-0.500 -2.600 -1.500 -3.800 -4.900 -3.800 s-4.400 1.200 -4.900 3.800 z" fill="#2c2a29"/><path d="M-4.300 0.200 c0.300 4.600 2.300 6.400 4.300 6.400 s4 -1.800 4.300 -6.400 c-1.200 2.100 -2.500 2.500 -4.300 2.500 s-3.100 -0.400 -4.300 -2.500 z" fill="#3a3634"/><path d="M-3.600 -2.800 h2.900 M0.700 -2.800 h2.900" stroke="#2a2827" stroke-width="1"/></g></svg>
<svg class="b" style="left:1877.3px;top:338.7px;" width="20" height="20" viewBox="-10.0 -10.0 20 20" fill="none" stroke="#374357" stroke-width="1.4" stroke-linecap="round" stroke-linejoin="round"><rect x="-5.4" y="-5.6" width="10.8" height="12.4" rx="1.8"/><path d="M-2.6 -5.600 v-0.900 a0.900 0.900 0 0 1 0.900 -0.900 h3.400 a0.900 0.900 0 0 1 0.900 0.900 v0.900" /></svg>
<svg class="b" style="left:2085.0px;top:338.6px;" width="20" height="20" viewBox="-10.0 -10.0 20 20" fill="none" stroke="#fff" stroke-width="1.4" stroke-linecap="round" stroke-linejoin="round"><rect x="-6.2" y="-5" width="12.4" height="11.600" rx="1.600"/><path d="M-6.200 -1.400 h12.400 M-3 -6.800 v3 M3 -6.800 v3"/></svg>
</div></body></html>
